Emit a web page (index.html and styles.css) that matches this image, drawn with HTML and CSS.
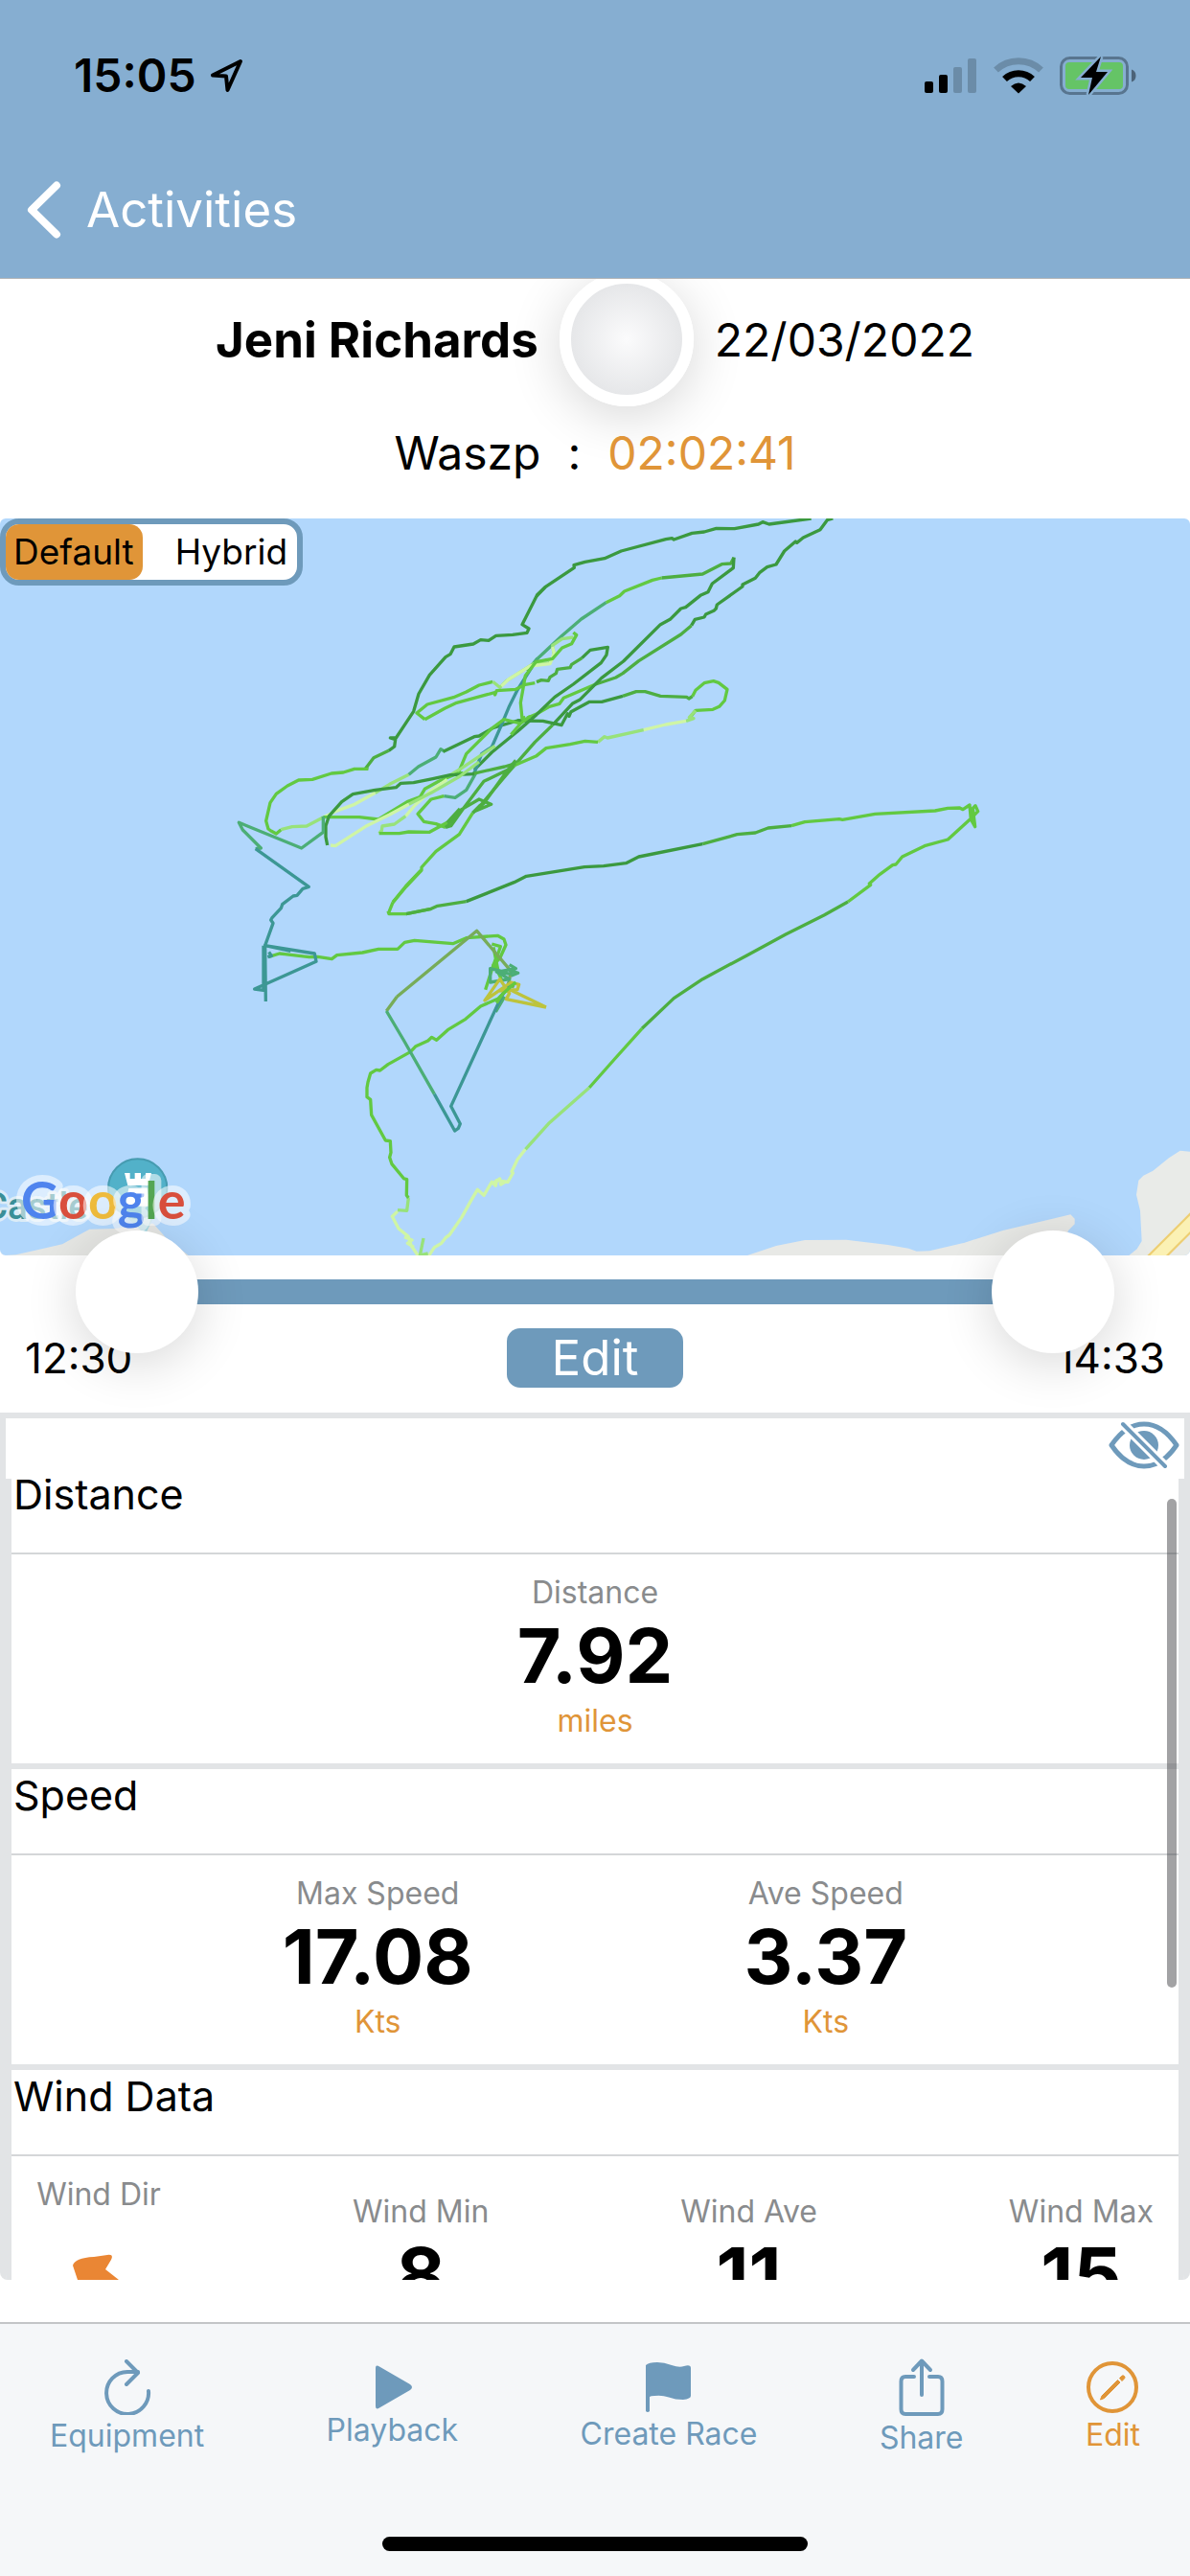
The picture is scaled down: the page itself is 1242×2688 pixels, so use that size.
FILE: index.html
```html
<!DOCTYPE html>
<html lang="en">
<head>
<meta charset="utf-8">
<meta name="viewport" content="width=device-width, initial-scale=1">
<title>Activity</title>
<link rel="stylesheet" href="styles.css">
</head>
<body>
<div class="app">
  <header class="top">
    <div class="status">
      <div class="status-left">
        <span class="clock">15:05</span>
        <svg class="locate" viewBox="0 0 36 36" aria-hidden="true"><path d="M32 3 3 17.500 17 18.500 18.500 33Z" fill="none" stroke="#000" stroke-width="4" stroke-linejoin="round"/></svg>
      </div>
      <div class="status-right">
        <svg class="signal" viewBox="0 0 56 38" aria-hidden="true">
          <rect x="1" y="25" width="9" height="12" rx="2"/>
          <rect x="16" y="18" width="9" height="19" rx="2"/>
          <rect x="31" y="10" width="9" height="27" rx="2" fill="#6b8ca8"/>
          <rect x="46" y="1" width="9" height="36" rx="2" fill="#6b8ca8"/>
        </svg>
        <svg class="wifi" viewBox="0 0 52 38" aria-hidden="true">
          <path d="M2.500 13A34.500 34.500 0 0 1 49.500 13" fill="none" stroke="#6b8ca8" stroke-width="7"/>
          <path d="M11.500 22.500A21 21 0 0 1 40.500 22.500" fill="none" stroke="#000" stroke-width="7"/>
          <path d="M18 30Q26 23 34 30L26 37.500Z"/>
        </svg>
        <svg class="battery" viewBox="0 0 80 42" aria-hidden="true">
          <rect x="1.500" y="2.500" width="69" height="37" rx="9" fill="none" stroke="#58758f" stroke-width="3"/>
          <path d="M75 14.500q4.500 1.500 4.500 6.500t-4.500 6.500z" fill="#4c6378"/>
          <rect x="6" y="7" width="60" height="28" rx="4" fill="#65c466"/>
          <path d="M43 1 22 23H34L30 41 50 17H38Z" fill="#000" stroke="#86aed1" stroke-width="5" paint-order="stroke"/>
        </svg>
      </div>
    </div>
    <a class="back" href="#activities">
      <svg class="chevron" viewBox="0 0 36 60" aria-hidden="true"><path d="M31 4.500 5 30 31 55.500" fill="none" stroke="#fff" stroke-width="8" stroke-linecap="round" stroke-linejoin="round"/></svg>
      <span>Activities</span>
    </a>
  </header>

  <main class="main">
    <div class="who">
      <strong>Jeni Richards</strong>
      <button class="avatar" type="button" aria-label="Profile"></button>
      <span>22/03/2022</span>
    </div>
    <div class="boat"><span>Waszp</span><span>:</span><span class="duration">02:02:41</span></div>

    <section class="map" aria-label="Track map">
      <svg class="chart" viewBox="0 541 1242 769" aria-hidden="true">
        <rect y="541" width="1242" height="769" fill="#b1d7fc"/>
        <!-- coastline and castle pin, west -->
        <g transform="translate(0 1180) scale(.33333)">
          <path d="M0 378 12 390 50 388 120 372 195 355 240 330 280 308 360 306 460 290H480L520 335 590 390V400H0Z" fill="#e6e7e4"/>
          <path d="M370 245 455 325 490 250Z" fill="#a4d8e2"/>
          <circle cx="431" cy="180" r="92" fill="#52b1c9" stroke="#469bb0" stroke-width="6"/>
          <path d="M390 132H407V150H422V132H441V150H456V132H474L464 171H400ZM403 180H460L472 236H392Z" fill="#fff"/>
          <text x="-52" y="276" class="place">Castle</text>
        </g>
        <!-- coastline and road, east -->
        <g transform="translate(860 1180) scale(.33333)">
          <path d="M-240 390-150 360-60 342 70 341 200 357 265 368 290 377 330 376 440 350 560 312 772 262 785 275V292L765 312 740 390V400H-240Z" fill="#e8e9e6"/>
          <path d="M1150 66 1115 62 1080 85 1030 125 1000 140 985 155 978 200 990 250 995 345 980 370 955 390V400H1150Z" fill="#e9ebe8"/>
          <path d="M1026 410 1166 270" stroke="#edce72" stroke-width="48"/>
          <path d="M1026 410 1166 270" stroke="#fbf1b4" stroke-width="35"/>
        </g>
        <!-- northern legs -->
        <g class="track" transform="translate(220 540) scale(.33333)">
          <g transform="translate(1020 0)">
            <path class="dark" d="M860 3 728 21 708 14 695 21 620 35 563 34 525 45 487 49 430 69 424 65 405 68 265 105 213 128 152 139 117 149 118 157 28 217 0 246"/>
            <path class="dark" d="M928 3 910 8 888 38 835 63 815 79 811 75 776 105 750 147 722 155 698 173 685 190 645 210V216L565 273 562 285 555 292 530 303 525 312 496 319 485 338"/>
            <path class="mid" d="M485 338 452 366 320 449 270 488 248 501 185 522"/>
            <path class="lime" d="M185 522 85 565 72 583 40 592 0 615-30 628"/>
            <path class="sea" d="M0 445 80 370 140 318 218 266"/>
            <path class="lime" d="M218 266 260 245 275 231 363 196 392 189"/>
            <path class="mid" d="M392 189 520 177 580 146 608 144 618 125"/>
            <path class="dark" d="M618 125 616 158 550 207 537 233 513 244 467 281 452 285 418 319 388 335 272 450 203 503 135 571 112 583 50 650"/>
            <path class="mid" d="M50 650-5 703-90 800-170 895-200 925"/>
            <path class="mid" d="M0 515 15 509 37 511 42 500 61 488 65 475 105 470 110 460 142 440"/>
            <path class="dark" d="M142 440 168 415 223 406 219 430 202 455 115 522 57 562 0 617-60 670-140 735-195 790"/>
            <path class="dark" d="M-60 636 20 637 78 650 97 614 102 622 108 608 166 577H204L270 559"/>
            <path class="mid" d="M270 559 312 545H340L388 559 470 562 477 567 488 560"/>
            <path class="lime" d="M488 560 498 541 525 518 554 512 570 517 597 538 589 573 572 592 552 601 498 604 484 622"/>
            <path class="lite" d="M498 604 478 626 492 629 468 637"/>
            <path class="pale" d="M468 637 405 648 335 665"/>
            <path class="lite" d="M335 665 222 690 213 686 192 703"/>
            <path class="lime" d="M192 703 152 700 105 710 30 722 0 746-70 776"/>
          </g>
          <path class="dark" d="M1048 217 1022 242 975 335 996 348 990 361 945 367 893 370 870 385 845 383 822 396 762 405 750 428 735 437 685 493 651 552 635 607 580 690H562L578 695 575 717 557 730"/>
          <path class="mid" d="M557 730 510 752 485 785 493 787"/>
          <path class="lime" d="M493 787H450L415 798 378 801 318 820 275 822 240 840 205 865 186 893 173 950 180 975 190 982 205 990 220 977"/>
          <path class="lite" d="M220 977 255 968 300 966 350 940"/>
          <path class="pale" d="M350 940 390 920 450 898 515 862"/>
          <path class="lite" d="M515 862 560 835 620 805"/>
          <path class="sea" d="M620 805 650 780 705 750 720 725 733 733"/>
          <path class="dark" d="M728 733 825 686 840 684 885 658 960 636H1000"/>
          <path class="teal" d="M1022 442 960 540 935 590 910 650 880 718 848 740 825 800"/>
          <path class="sea" d="M1022 442 990 480M830 800 800 853 765 877 730 872"/>
          <path class="lime" d="M730 872 690 882 648 928 667 952 705 959 735 970"/>
          <path class="mid" d="M735 970 775 920 840 882 878 898 825 920 845 900M735 970 752 965 790 912 855 826 930 790 855 895 820 925M930 790 955 760"/>
          <path class="lime" d="M820 925 778 992 705 1045 660 1095V1104L612 1155 570 1205"/>
          <path class="mid" d="M820 802 920 780 955 770"/>
          <path class="lime" d="M670 632 645 612 678 585 760 563 800 546 840 525 883 514"/>
          <path class="lite" d="M883 514 905 532 925 512 1010 458 1060 455 1075 430 1070 400 1100 380 1135 375"/>
          <path class="pale" d="M910 528 932 507 1000 465 1062 458 1075 425 1070 405"/>
          <path class="lime" d="M1135 360 1145 368 1130 395 1100 408 1070 442 1018 452 985 495 970 580 975 630 985 625M670 632 732 598 770 580 892 547 890 555 895 542 955 538 985 523 1015 518"/>
          <path class="lime" d="M1000 622 970 645 918 632 880 660 800 740 775 800 790 800M970 645 940 680"/>
          <path class="lite" d="M890 715 785 785 740 812"/>
          <path class="lime" d="M775 800 715 825 670 850 655 875 615 890 525 945 465 938H352"/>
          <path class="dark" d="M825 803 750 806 695 818 635 830 595 832 580 845 515 853 445 866 410 890 370 935 360 965V1000L365 1026"/>
          <path class="pale" d="M740 820 690 855 640 900 610 935"/>
          <path class="lite" d="M610 935 575 960 537 966 535 980 527 989M840 765 780 810 690 862 620 898"/>
          <path class="pale" d="M620 898 560 930 485 967 390 1028 375 1026"/>
          <path class="lime" d="M527 989H590L620 984 685 985 740 955"/>
          <path class="mid" d="M740 955 780 912"/>
          <path class="sea" d="M352 935V985L284 1035 88 955 100 978 157 1035 140 1037"/>
          <path class="teal" d="M140 1037 307 1156 288 1162 270 1183 258 1185 224 1211 220 1223 192 1253 188 1260 195 1270 170 1340"/>
        </g>
        <!-- southern legs -->
        <g class="track" transform="translate(220 840) scale(.33333)">
          <path class="lime" d="M555 332 558 341H612L690 325M570 305 558 335M657 205 610 255 570 305"/>
          <path class="mid" d="M612 341 690 325 710 316 800 302"/>
          <path class="dark" d="M800 302 950 242 988 223 1170 194 1230 191 1300 182 1340 162 1540 122"/>
          <path class="mid" d="M1540 122 1648 92 1705 87 1745 72 1818 65"/>
          <path class="lime" d="M1818 65 1860 53 1968 44 1978 46 2080 28 2268 18 2308 10 2345 9 2355 14 2376 0 2380 45 2393 68 2386 10 2394 2 2402 20 2378 44 2308 108 2235 128 2165 162 2145 186 2135 188 2095 217 2062 246 2066 250 1995 303"/>
          <path class="mid" d="M1995 303 1920 345 1800 405 1680 470 1540 545 1450 605 1350 700"/>
          <path class="lime" d="M1350 700 1262 798 1185 885"/>
          <path class="lite" d="M1185 885 1060 995 985 1078"/>
          <path class="pale" d="M985 1078 960 1110 942 1148 946 1152 930 1180 895 1175 892 1192 880 1180 855 1222 835 1204 815 1238 785 1292 748 1345 735 1355 722 1372 700 1385 682 1412M650 1412 628 1380 618 1350 588 1326 568 1288 585 1272M606 1352 630 1362 616 1372 636 1384M880 1186 905 1170 908 1188 925 1178"/>
          <path class="lite" d="M585 1268 614 1270 619 1230M666 1356 655 1410 680 1404"/>
          <path class="lime" d="M619 1230 613 1222 614 1172 605 1170 567 1124 560 1103 564 1088 562 1052 547 1050 503 970 500 922 489 914V885L492 868 500 840 518 829 530 831 555 812 625 773 642 755 680 738 692 727 707 736 742 704 798 670 845 630 900 606 950 555"/>
          <path class="lime" d="M182 475 215 465 232 467 308 476 335 475 379 482 395 470 475 462 525 451H585L607 430 638 424 758 434 800 416 898 409 918 420 924 438 905 480 885 500 860 578"/>
          <path class="lime" d="M880 435 907 443 888 500 910 545M885 445 900 520 884 505 896 470"/>
          <path class="teal" d="M170 440 172 615M165 440V580L137 576 330 490 325 465 170 440 250 457M182 460 190 472 178 476"/>
          <path class="olive" d="M583 600 833 394 940 520 932 560 950 570M583 600 550 645"/>
          <path class="sea" d="M550 645 605 738 700 905M935 500 955 512 910 520 875 512V555L935 545 895 522 945 530M940 535 962 526 930 515M920 600 892 648"/>
          <path class="teal" d="M700 905 764 1020 775 1012 781 998 752 943 905 610 935 555"/>
          <path class="gold" d="M1050 633 925 608 935 590 905 545 858 612 940 555 965 562 960 578 900 582M940 580 1050 633"/>
          <path class="lime" d="M895 620 915 590 955 555"/>
        </g>
        <text x="22" y="1272" class="google"><tspan fill="#4f84ee">G</tspan><tspan fill="#d94f3d">o</tspan><tspan fill="#eebb3c">o</tspan><tspan fill="#4f84ee">g</tspan><tspan fill="#54a653">l</tspan><tspan fill="#d94f3d">e</tspan></text>
      </svg>
      <div class="layers" role="group" aria-label="Map type">
        <button class="layer layer-on" type="button" aria-pressed="true">Default</button>
        <button class="layer" type="button" aria-pressed="false">Hybrid</button>
      </div>
    </section>

    <section class="range" aria-label="Time range">
      <div class="rail">
        <input class="thumb" type="range" min="0" max="123" value="0" aria-label="Start time">
        <input class="thumb" type="range" min="0" max="123" value="123" aria-label="End time">
      </div>
      <div class="times">
        <span>12:30</span>
        <button class="edit" type="button">Edit</button>
        <span class="end">14:33</span>
      </div>
    </section>

    <section class="panel">
      <div class="strip">
        <button class="hide" type="button" aria-label="Hide data">
          <svg viewBox="0 0 74 52" aria-hidden="true">
            <path d="M3 26Q18 4 37 4T71 26Q56 48 37 48T3 26Z" fill="none" stroke="#6e9abb" stroke-width="5" stroke-linejoin="round"/>
            <circle cx="37" cy="26" r="15" fill="#6e9abb"/>
            <path d="M14 3 60 49" stroke="#fff" stroke-width="10"/>
            <path d="M15 4 59 48" stroke="#6e9abb" stroke-width="4" stroke-linecap="round"/>
          </svg>
        </button>
      </div>
      <div class="cards">
        <article class="card">
          <h2>Distance</h2>
          <div class="stats">
            <div class="stat"><span class="label">Distance</span><b>7.92</b><span class="unit">miles</span></div>
          </div>
        </article>
        <article class="card">
          <h2>Speed</h2>
          <div class="stats">
            <div class="stat"><span class="label">Max Speed</span><b>17.08</b><span class="unit">Kts</span></div>
            <div class="stat"><span class="label">Ave Speed</span><b>3.37</b><span class="unit">Kts</span></div>
          </div>
        </article>
        <article class="card">
          <h2>Wind Data</h2>
          <div class="stats spread">
            <div class="stat"><span class="label">Wind Dir</span>
              <svg class="wind" viewBox="0 0 130 174" aria-hidden="true"><path d="M38 54Q40 46 60 45L74 43Q81 42 78 48L72 58 86 69 112 104 52 120 43 69Z" fill="#ea8634"/></svg>
            </div>
            <div class="stat"><span class="label">Wind Min</span><b>8</b></div>
            <div class="stat"><span class="label">Wind Ave</span><b>11</b></div>
            <div class="stat"><span class="label">Wind Max</span><b>15</b></div>
          </div>
        </article>
      </div>
      <div class="scrollbar"></div>
    </section>
  </main>

  <footer class="bottom">
    <nav class="tabs">
      <button class="tab" type="button">
        <svg width="58" height="58" viewBox="0 0 58 58" aria-hidden="true"><path d="M51 33A22 22 0 1 1 29 13H40" fill="none" stroke="#6e9abb" stroke-width="4" stroke-linecap="round"/><path d="M28 2 40 14 28 26" fill="none" stroke="#6e9abb" stroke-width="4" stroke-linecap="round" stroke-linejoin="round"/></svg>
        <span>Equipment</span>
      </button>
      <button class="tab" type="button">
        <svg width="46" height="46" viewBox="0 0 46 46" aria-hidden="true"><path d="M6 3Q6-1 10 1.500L42 20Q46 23 42 26L10 44.500Q6 47 6 43Z" fill="#6e9abb"/></svg>
        <span>Playback</span>
      </button>
      <button class="tab" type="button">
        <svg width="54" height="54" viewBox="0 0 54 54" aria-hidden="true"><path d="M3 52V4Q6 1 15 1 22 1 30 4T43 5Q50 3 50 7V36Q50 39 42 40 34 40 27 37.500T12 36Q8 36 7 37V52Q5 54 3 52Z" fill="#6e9abb"/></svg>
        <span>Create Race</span>
      </button>
      <button class="tab" type="button">
        <svg width="62" height="62" viewBox="0 0 62 62" aria-hidden="true"><path d="M23 20H14Q9.500 20 9.500 25V54Q9.500 59 14 59H48Q52.500 59 52.500 54V25Q52.500 20 48 20H39M31 39V4M22 13 31 3.500 40 13" fill="none" stroke="#6e9abb" stroke-width="4" stroke-linecap="round" stroke-linejoin="round"/></svg>
        <span>Share</span>
      </button>
      <button class="tab active" type="button">
        <svg width="56" height="56" viewBox="0 0 56 56" aria-hidden="true"><circle cx="28" cy="28" r="25" fill="none" stroke="#e09538" stroke-width="4"/><path d="M17 37 33.500 20.500 36 23 19.500 39.500 15.500 41ZM35.500 18.500 37.500 16.500Q39 15 40.500 16.500T40 19.500L38 21.500Z" fill="#e09538" stroke="#e09538" stroke-linejoin="round"/></svg>
        <span>Edit</span>
      </button>
    </nav>
    <div class="home"></div>
  </footer>
</div>
</body>
</html>
```
FILE: styles.css
```css
*, *::before, *::after { box-sizing: border-box; }

body {
  margin: 0;
  background: #fff;
  color: #000;
  font-family: Inter, "Liberation Sans", sans-serif;
  font-size: 48px;
}

button {
  margin: 0;
  padding: 0;
  border: 0;
  background: none;
  color: inherit;
  font: inherit;
}

svg { display: block; }

.app {
  display: flex;
  flex-direction: column;
  height: 100vh;
}

/* Header */
.top {
  position: relative;
  z-index: 2;
  background: #86aed1;
  border-bottom: 1px solid #b0b3b6;
}

.status {
  display: flex;
  justify-content: space-between;
  align-items: center;
  padding: 48px 56px 0 77px;
  height: 109px;
}

.status-left { display: flex; align-items: center; gap: 14px; }
.clock { font-weight: 600; line-height: 60px; }
.locate { width: 36px; height: 36px; }
.status-right { display: flex; align-items: center; gap: 17px; }
.signal { width: 56px; height: 38px; }
.wifi { width: 52px; height: 38px; }
.battery { width: 80px; height: 42px; }

.back {
  display: flex;
  align-items: center;
  gap: 26px;
  margin-top: 80px;
  padding: 0 28px 41px;
  color: #fff;
  font-size: 51px;
  line-height: 60px;
  text-decoration: none;
}

.chevron { width: 36px; height: 60px; }

/* Main */
.main {
  flex: 1;
  min-height: 0;
  display: flex;
  flex-direction: column;
}

.who {
  display: flex;
  justify-content: center;
  align-items: center;
  gap: 22px;
  height: 126px;
}

.who strong { font-size: 51px; font-weight: 700; }

.avatar {
  flex: none;
  width: 140px;
  height: 140px;
  border: 12px solid #fff;
  border-radius: 50%;
  background: radial-gradient(circle, #fbfbfc 0, #e6e7e9 70%);
  box-shadow: 0 10px 54px rgba(0, 0, 0, .16);
}

.boat {
  display: flex;
  justify-content: center;
  gap: 28px;
  padding: 26px 0 38px;
  line-height: 60px;
}

.duration { color: #e09538; }

.map {
  position: relative;
  flex: none;
  border-radius: 6px;
  overflow: hidden;
}

.chart { width: 100%; }

.track path {
  fill: none;
  stroke-width: 10;
  stroke-linejoin: round;
}

.track .dark { stroke: #3b993f; }
.track .mid { stroke: #4dae41; }
.track .lime { stroke: #62c941; }
.track .lite { stroke: #98e27a; }
.track .pale { stroke: #cff5a5; }
.track .teal { stroke: #3c9794; }
.track .sea { stroke: #4cae76; }
.track .olive { stroke: #77ac58; }
.track .gold { stroke: #bdc33c; }

.place {
  fill: #3a8f98;
  stroke: #dcecf7;
  stroke-width: 18px;
  stroke-linejoin: round;
  paint-order: stroke;
  font: 500 116px Roboto, sans-serif;
}

.google {
  stroke: rgba(255, 255, 255, .55);
  stroke-width: 14px;
  stroke-linejoin: round;
  paint-order: stroke;
  font: 700 54px Lato, sans-serif;
}

.layers {
  position: absolute;
  top: 0;
  left: 0;
  display: flex;
  border: 6px solid #6e9abb;
  border-radius: 20px;
  background: #fff;
}

.layer {
  padding: 0 10px 0 34px;
  border-radius: 14px;
  font-size: 37px;
  line-height: 58px;
}

.layer-on { padding: 0 9px 0 8px; background: #e09538; }

/* Time range */
.rail {
  position: relative;
  z-index: 1;
  margin: 25px 143px;
  height: 26px;
  background: #6e9abb;
}

.thumb {
  position: absolute;
  top: -51px;
  left: -64px;
  width: calc(100% + 128px);
  height: 128px;
  margin: 0;
  background: none;
  appearance: none;
  pointer-events: none;
}

.thumb::-webkit-slider-thumb {
  appearance: none;
  width: 128px;
  height: 128px;
  border: 0;
  border-radius: 50%;
  background: #fff;
  box-shadow: 0 10px 54px rgba(0, 0, 0, .16);
  pointer-events: auto;
}

.times {
  display: grid;
  grid-template-columns: 1fr auto 1fr;
  align-items: center;
  padding: 0 26px 26px;
  font-size: 44px;
  line-height: 62px;
}

.end { text-align: right; }

.edit {
  width: 184px;
  border-radius: 14px;
  background: #6e9abb;
  color: #fff;
  font-size: 51px;
}

/* Data panel */
.panel {
  position: relative;
  flex: 1;
  min-height: 0;
  margin-bottom: 44px;
  border: 6px solid #e2e4e6;
  border-bottom: 0;
  border-radius: 0 0 8px 8px;
  overflow: hidden;
}

.strip {
  position: relative;
  z-index: 1;
  display: flex;
  justify-content: flex-end;
  height: 63px;
  padding: 2px 5px 0;
  background: #fff;
}

.hide { height: 52px; }
.hide svg { width: 74px; height: 52px; }

.cards {
  display: flex;
  flex-direction: column;
  gap: 6px;
  margin-top: -11px;
  border: 0 solid #e2e4e6;
  border-width: 0 6px;
  background: #e2e4e6;
}

.card { background: #fff; }

.card h2 {
  margin: 0;
  padding: 0 2px 34px;
  border-bottom: 2px solid #d4d6d8;
  font-size: 43px;
  font-weight: 400;
  line-height: 54px;
}

.stats {
  display: flex;
  justify-content: space-evenly;
  align-items: center;
  padding: 20px 0;
}

.spread {
  justify-content: space-between;
  align-items: flex-start;
  padding: 20px 26px;
}

.spread .stat + .stat { margin-top: 18px; }

.stat {
  display: flex;
  flex-direction: column;
  align-items: center;
}

.label { color: #898b8d; font-size: 32px; line-height: 40px; }
.stat b { font-size: 79px; font-weight: 700; line-height: 90px; }
.unit { color: #e09538; font-size: 32px; line-height: 48px; }
.wind { width: 130px; height: 174px; }

.scrollbar {
  position: absolute;
  z-index: 2;
  top: 84px;
  right: 8px;
  width: 10px;
  height: 510px;
  border-radius: 5px;
  background: rgba(60, 60, 64, .48);
}

/* Tab bar */
.bottom {
  flex: none;
  border-top: 2px solid #c3c5c7;
  background: #f5f7f9;
}

.tabs {
  display: flex;
  justify-content: space-between;
  align-items: center;
  height: 176px;
  padding: 0 52px;
}

.tab {
  display: flex;
  flex-direction: column;
  align-items: center;
  color: #6e9abb;
  font-size: 32px;
  line-height: 44px;
}

.active { color: #e09538; }

.home {
  width: 444px;
  height: 15px;
  margin: 46px auto 26px;
  border-radius: 8px;
  background: #000;
}
```
